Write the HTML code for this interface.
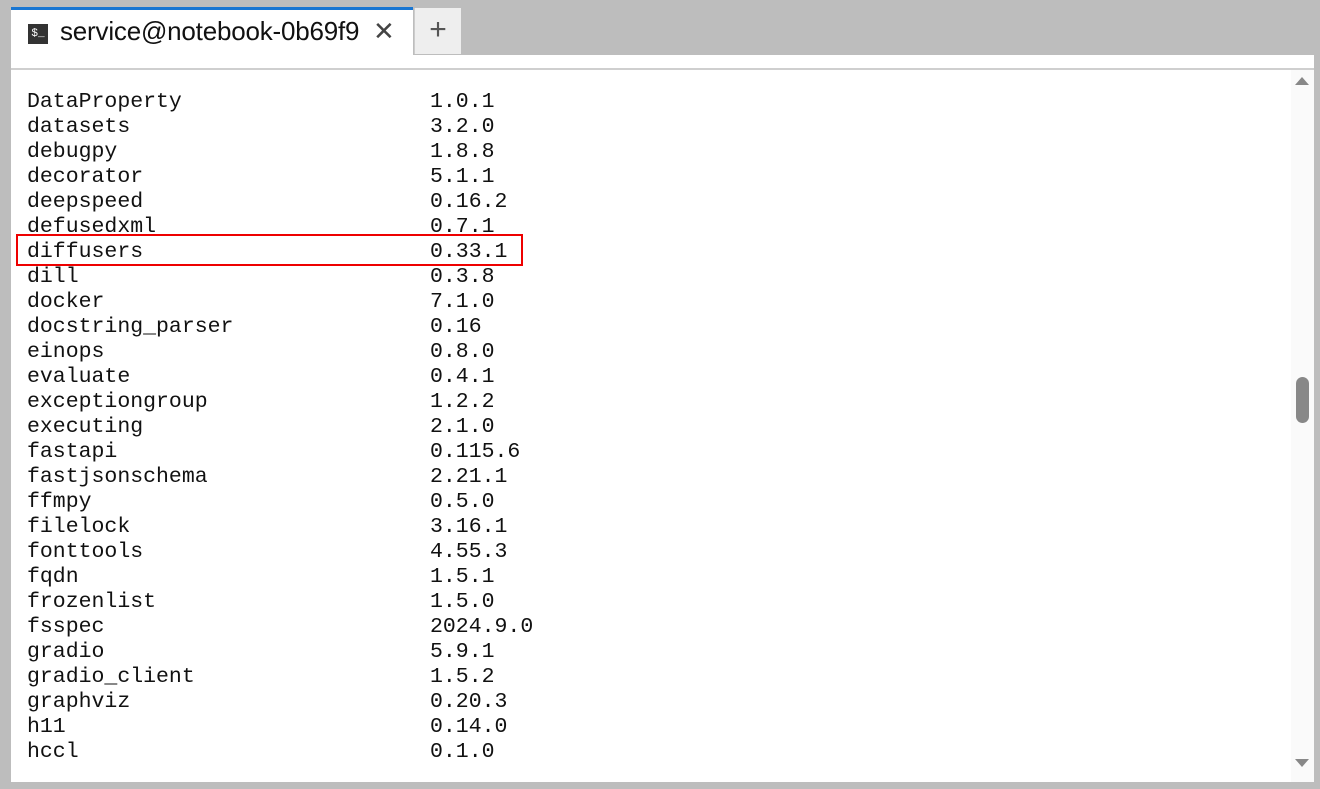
<!DOCTYPE html>
<html><head><meta charset="utf-8"><style>
html,body{margin:0;padding:0;}
body{width:1320px;height:789px;background:#bdbdbd;position:relative;overflow:hidden;font-family:"Liberation Sans",sans-serif;}
.tab{position:absolute;left:11px;top:7px;width:402px;height:48px;background:#fff;border-top:3px solid #1976d2;box-sizing:border-box;}
.tab .ic{position:absolute;left:17px;top:14px;width:20px;height:20px;background:#333;color:#fff;font-size:11px;line-height:20px;text-align:center;font-family:"Liberation Mono",monospace;}
.tab .t{position:absolute;left:49px;top:6px;font-size:26px;letter-spacing:-0.2px;color:#111;}
.tab .x{position:absolute;left:362px;top:6px;font-size:26px;color:#444;}
.plus{position:absolute;left:414px;top:8px;width:46px;height:46px;background:#eeeeee;border-left:1px solid #ccc;color:#555;font-size:30px;text-align:center;line-height:44px;}
.main{position:absolute;left:11px;top:55px;width:1303px;height:727px;background:#fff;}
.hline{position:absolute;left:0;top:13px;width:1303px;height:2px;background:#cfcfcf;}
.sb{position:absolute;left:1280px;top:15px;width:23px;height:712px;background:#fafafa;}
.thumb{position:absolute;left:1296px;top:377px;width:13px;height:46px;border-radius:7px;background:#888;}
.up{position:absolute;left:1295px;top:77px;width:0;height:0;border-left:7px solid transparent;border-right:7px solid transparent;border-bottom:8px solid #888;}
.dn{position:absolute;left:1295px;top:759px;width:0;height:0;border-left:7px solid transparent;border-right:7px solid transparent;border-top:8px solid #888;}
.l{position:absolute;font-family:"Liberation Mono",monospace;font-size:21.5px;color:#111;white-space:pre;line-height:25px;}
.box{position:absolute;left:16px;top:234px;width:507px;height:32px;border:2px solid #e00;box-sizing:border-box;}
</style></head><body>
<div class="tab"><div class="ic">$_</div><div class="t">service@notebook-0b69f9</div><div class="x">✕</div></div>
<div class="plus">+</div>
<div class="main"><div class="hline"></div><div class="sb"></div></div>
<div class="up"></div><div class="dn"></div><div class="thumb"></div>
<div class="l" style="left:27px;top:90px">DataProperty
datasets
debugpy
decorator
deepspeed
defusedxml
diffusers
dill
docker
docstring_parser
einops
evaluate
exceptiongroup
executing
fastapi
fastjsonschema
ffmpy
filelock
fonttools
fqdn
frozenlist
fsspec
gradio
gradio_client
graphviz
h11
hccl</div>
<div class="l" style="left:430px;top:90px">1.0.1
3.2.0
1.8.8
5.1.1
0.16.2
0.7.1
0.33.1
0.3.8
7.1.0
0.16
0.8.0
0.4.1
1.2.2
2.1.0
0.115.6
2.21.1
0.5.0
3.16.1
4.55.3
1.5.1
1.5.0
2024.9.0
5.9.1
1.5.2
0.20.3
0.14.0
0.1.0</div>
<div class="box"></div>
</body></html>
